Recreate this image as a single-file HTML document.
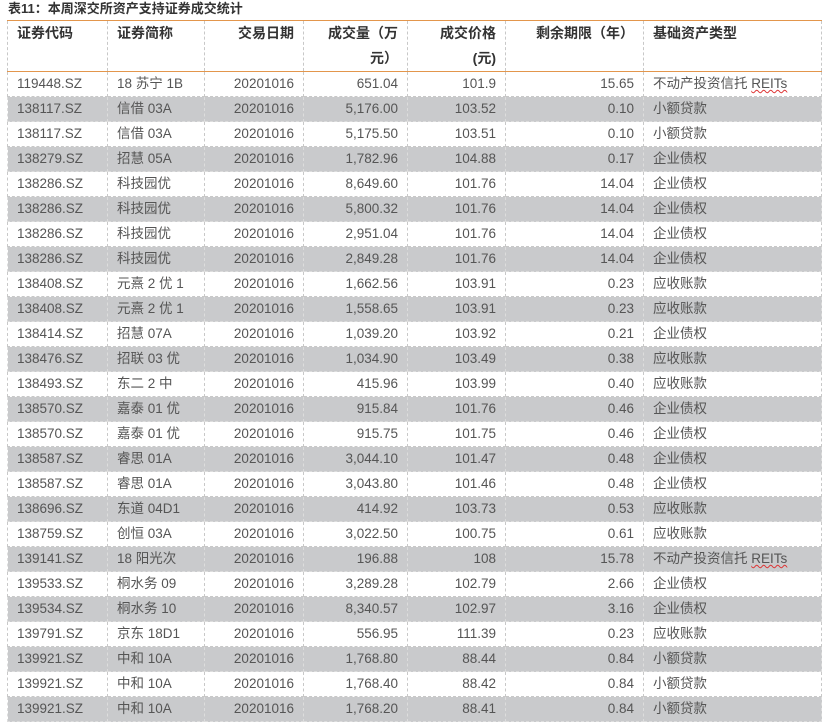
<!DOCTYPE html>
<html><head><meta charset="utf-8"><style>
body{margin:0;background:#fff;width:833px;height:722px;overflow:hidden;font-family:"Liberation Sans","Noto Sans CJK SC",sans-serif;}
.t{position:absolute;left:8px;top:0;font-size:13px;font-weight:bold;color:#333;line-height:18px;}
table{position:absolute;left:7px;top:20px;border-collapse:collapse;table-layout:fixed;width:814px;font-size:13.5px;color:#555;}
td{height:24px;padding:0 9px;border:1px dashed #c8c8c8;white-space:nowrap;overflow:visible;line-height:24px;box-sizing:border-box}
tr.h td{border-top:1.5px solid #e3964c;border-bottom:1.5px solid #e3964c;height:48px;vertical-align:top;font-weight:bold;color:#333;line-height:25px;font-size:14px}
tr td{height:25px}
tr.g td{background:#c9cacc;border-color:#ddd}
.r{text-align:right}
u{text-decoration:underline wavy #d33;text-decoration-thickness:1px}
</style></head><body>
<div class="t">表11：本周深交所资产支持证券成交统计</div>
<table>
<colgroup><col style="width:100px"><col style="width:97px"><col style="width:99px"><col style="width:104px"><col style="width:98px"><col style="width:138px"><col style="width:178px"></colgroup>
<tr class="h"><td>证券代码</td><td>证券简称</td><td class="r">交易日期</td><td class="r">成交量（万<br>元）</td><td class="r">成交价格<br>(元)</td><td class="r">剩余期限（年）</td><td>基础资产类型</td></tr>
<tr><td>119448.SZ</td><td>18 苏宁 1B</td><td class="r">20201016</td><td class="r">651.04</td><td class="r">101.9</td><td class="r">15.65</td><td>不动产投资信托 <u>REITs</u></td></tr>
<tr class="g"><td>138117.SZ</td><td>信借 03A</td><td class="r">20201016</td><td class="r">5,176.00</td><td class="r">103.52</td><td class="r">0.10</td><td>小额贷款</td></tr>
<tr><td>138117.SZ</td><td>信借 03A</td><td class="r">20201016</td><td class="r">5,175.50</td><td class="r">103.51</td><td class="r">0.10</td><td>小额贷款</td></tr>
<tr class="g"><td>138279.SZ</td><td>招慧 05A</td><td class="r">20201016</td><td class="r">1,782.96</td><td class="r">104.88</td><td class="r">0.17</td><td>企业债权</td></tr>
<tr><td>138286.SZ</td><td>科技园优</td><td class="r">20201016</td><td class="r">8,649.60</td><td class="r">101.76</td><td class="r">14.04</td><td>企业债权</td></tr>
<tr class="g"><td>138286.SZ</td><td>科技园优</td><td class="r">20201016</td><td class="r">5,800.32</td><td class="r">101.76</td><td class="r">14.04</td><td>企业债权</td></tr>
<tr><td>138286.SZ</td><td>科技园优</td><td class="r">20201016</td><td class="r">2,951.04</td><td class="r">101.76</td><td class="r">14.04</td><td>企业债权</td></tr>
<tr class="g"><td>138286.SZ</td><td>科技园优</td><td class="r">20201016</td><td class="r">2,849.28</td><td class="r">101.76</td><td class="r">14.04</td><td>企业债权</td></tr>
<tr><td>138408.SZ</td><td>元熹 2 优 1</td><td class="r">20201016</td><td class="r">1,662.56</td><td class="r">103.91</td><td class="r">0.23</td><td>应收账款</td></tr>
<tr class="g"><td>138408.SZ</td><td>元熹 2 优 1</td><td class="r">20201016</td><td class="r">1,558.65</td><td class="r">103.91</td><td class="r">0.23</td><td>应收账款</td></tr>
<tr><td>138414.SZ</td><td>招慧 07A</td><td class="r">20201016</td><td class="r">1,039.20</td><td class="r">103.92</td><td class="r">0.21</td><td>企业债权</td></tr>
<tr class="g"><td>138476.SZ</td><td>招联 03 优</td><td class="r">20201016</td><td class="r">1,034.90</td><td class="r">103.49</td><td class="r">0.38</td><td>应收账款</td></tr>
<tr><td>138493.SZ</td><td>东二 2 中</td><td class="r">20201016</td><td class="r">415.96</td><td class="r">103.99</td><td class="r">0.40</td><td>应收账款</td></tr>
<tr class="g"><td>138570.SZ</td><td>嘉泰 01 优</td><td class="r">20201016</td><td class="r">915.84</td><td class="r">101.76</td><td class="r">0.46</td><td>企业债权</td></tr>
<tr><td>138570.SZ</td><td>嘉泰 01 优</td><td class="r">20201016</td><td class="r">915.75</td><td class="r">101.75</td><td class="r">0.46</td><td>企业债权</td></tr>
<tr class="g"><td>138587.SZ</td><td>睿思 01A</td><td class="r">20201016</td><td class="r">3,044.10</td><td class="r">101.47</td><td class="r">0.48</td><td>企业债权</td></tr>
<tr><td>138587.SZ</td><td>睿思 01A</td><td class="r">20201016</td><td class="r">3,043.80</td><td class="r">101.46</td><td class="r">0.48</td><td>企业债权</td></tr>
<tr class="g"><td>138696.SZ</td><td>东道 04D1</td><td class="r">20201016</td><td class="r">414.92</td><td class="r">103.73</td><td class="r">0.53</td><td>应收账款</td></tr>
<tr><td>138759.SZ</td><td>创恒 03A</td><td class="r">20201016</td><td class="r">3,022.50</td><td class="r">100.75</td><td class="r">0.61</td><td>应收账款</td></tr>
<tr class="g"><td>139141.SZ</td><td>18 阳光次</td><td class="r">20201016</td><td class="r">196.88</td><td class="r">108</td><td class="r">15.78</td><td>不动产投资信托 <u>REITs</u></td></tr>
<tr><td>139533.SZ</td><td>桐水务 09</td><td class="r">20201016</td><td class="r">3,289.28</td><td class="r">102.79</td><td class="r">2.66</td><td>企业债权</td></tr>
<tr class="g"><td>139534.SZ</td><td>桐水务 10</td><td class="r">20201016</td><td class="r">8,340.57</td><td class="r">102.97</td><td class="r">3.16</td><td>企业债权</td></tr>
<tr><td>139791.SZ</td><td>京东 18D1</td><td class="r">20201016</td><td class="r">556.95</td><td class="r">111.39</td><td class="r">0.23</td><td>应收账款</td></tr>
<tr class="g"><td>139921.SZ</td><td>中和 10A</td><td class="r">20201016</td><td class="r">1,768.80</td><td class="r">88.44</td><td class="r">0.84</td><td>小额贷款</td></tr>
<tr><td>139921.SZ</td><td>中和 10A</td><td class="r">20201016</td><td class="r">1,768.40</td><td class="r">88.42</td><td class="r">0.84</td><td>小额贷款</td></tr>
<tr class="g"><td>139921.SZ</td><td>中和 10A</td><td class="r">20201016</td><td class="r">1,768.20</td><td class="r">88.41</td><td class="r">0.84</td><td>小额贷款</td></tr>
</table>
</body></html>
